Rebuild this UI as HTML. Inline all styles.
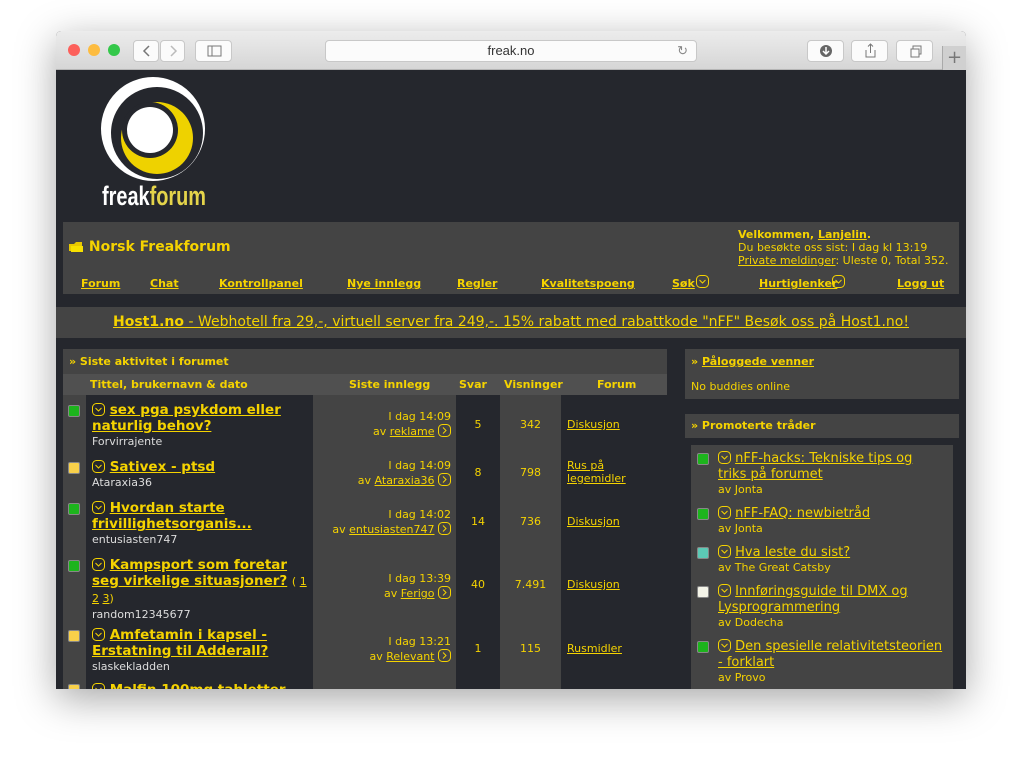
<!DOCTYPE html>
<html><head><meta charset="utf-8"><style>
*{margin:0;padding:0;box-sizing:border-box}
body{width:1024px;height:768px;background:#fff;position:relative;overflow:hidden;font-family:"DejaVu Sans","Liberation Sans",sans-serif;font-size:11px;color:#f5d300}
.win{position:absolute;left:56px;top:31px;width:910px;height:658px;background:#25272d;box-shadow:0 10px 40px rgba(0,0,0,.35);border-radius:5px 5px 0 0;overflow:hidden}
.bar{position:absolute;left:0;top:0;width:910px;height:39px;background:linear-gradient(#ececec,#d6d6d6);border-bottom:1px solid #b5b5b5}
.dot{position:absolute;top:13px;width:12px;height:12px;border-radius:50%}
.btn{position:absolute;top:9px;height:22px;background:#fbfbfb;border:1px solid #c8c8c8;border-radius:4px}
.a{position:absolute}
a,.u{color:#f5d300;text-decoration:underline}
.p{background:#444}
.b{font-weight:bold}
.ic{display:inline-block;vertical-align:-2px}
.sq{position:absolute;width:12px;height:12px;border-radius:2px;border:1px solid #888}
.t{font-size:13.5px;font-weight:bold;line-height:16px}
.r{text-align:right}
.c{text-align:center}
.pi{position:absolute;left:640px;width:250px;font-size:13px;line-height:16px;padding-left:22px}
.pi .sq{left:1px;top:2px}
</style></head><body>
<div class="win">
 <div class="bar">
  <div class="dot" style="left:12px;background:#fc605b"></div>
  <div class="dot" style="left:32px;background:#fdbc40"></div>
  <div class="dot" style="left:52px;background:#34c84a"></div>
  <div class="btn" style="left:77px;width:26px"><svg width="26" height="20"><path d="M15 5l-5 5 5 5" stroke="#777" stroke-width="1.5" fill="none"/></svg></div>
  <div class="btn" style="left:104px;width:25px"><svg width="25" height="20"><path d="M10 5l5 5-5 5" stroke="#bbb" stroke-width="1.5" fill="none"/></svg></div>
  <div class="btn" style="left:139px;width:37px"><svg width="37" height="20"><rect x="12" y="5" width="13" height="10" stroke="#777" fill="none"/><line x1="16" y1="5" x2="16" y2="15" stroke="#777"/></svg></div>
  <div class="btn" style="left:269px;width:372px;text-align:center;font-family:'Liberation Sans',sans-serif;font-size:13px;color:#333;line-height:20px">freak.no<span style="position:absolute;right:8px;color:#888">↻</span></div>
  <div class="btn" style="left:751px;width:37px"><svg width="37" height="20"><circle cx="18" cy="10" r="6" fill="#666"/><path d="M18 6v6M15 10l3 3 3-3" stroke="#fff" stroke-width="1.5" fill="none"/></svg></div>
  <div class="btn" style="left:795px;width:37px"><svg width="37" height="20"><path d="M14 9v7h9V9M18.5 3v9M16 5.5l2.5-2.5 2.5 2.5" stroke="#777" fill="none"/></svg></div>
  <div class="btn" style="left:840px;width:37px"><svg width="37" height="20"><rect x="14" y="8" width="8" height="8" stroke="#777" fill="none"/><path d="M16 8V5h8v8h-2" stroke="#777" fill="none"/></svg></div>
  <div style="position:absolute;left:886px;top:15px;width:24px;height:24px;background:#d0d0d0;border-left:1px solid #aaa;color:#777;font-size:18px;text-align:center;line-height:24px">+</div>
 </div>
 <!-- logo -->
 <svg class="a" style="left:44px;top:46px" width="112" height="132" viewBox="0 0 112 132">
  <circle cx="53" cy="52" r="52" fill="#fff"/>
  <circle cx="57" cy="56" r="46" fill="#25272d"/>
  <circle cx="57" cy="61" r="36" fill="#eed200"/>
  <circle cx="50" cy="53" r="28" fill="#25272d"/>
  <circle cx="50" cy="53" r="23" fill="#fff"/>
  <text x="2" y="128" font-family="Liberation Sans,sans-serif" font-weight="bold" font-size="27" fill="#fff" textLength="104" lengthAdjust="spacingAndGlyphs">freak<tspan fill="#e4d44a">forum</tspan></text>
 </svg>
 <!-- nav panel -->
 <div class="a p" style="left:7px;top:191px;width:896px;height:72px"></div>
 <div class="a b" style="left:12px;top:208px;font-size:14px"><svg class="ic" width="16" height="14"><path d="M1 5h5l2-2h6v9H1z" fill="#e8c800"/><path d="M3 7h12v6H3z" fill="#f7e000"/></svg> Norsk Freakforum</div>
 <div class="a" style="left:682px;top:197px;line-height:13px;font-size:11px"><span class="b">Velkommen, <span class="u">Lanjelin</span>.</span><br>Du besøkte oss sist: I dag kl 13:19<br><span class="u">Private meldinger</span>: Uleste 0, Total 352.</div>
 <div class="a b" style="left:0;top:246px;font-size:11px;width:910px">
  <a class="a" style="left:25px">Forum</a><a class="a" style="left:94px">Chat</a><a class="a" style="left:163px">Kontrollpanel</a><a class="a" style="left:291px">Nye innlegg</a><a class="a" style="left:401px">Regler</a><a class="a" style="left:485px">Kvalitetspoeng</a><a class="a" style="left:616px">Søk</a><svg class="a" style="left:640px;top:-2px" width="13" height="13"><rect x="0.5" y="0.5" width="12" height="12" rx="4" stroke="#f5d300" fill="none"/><path d="M3.5 5l3 3 3-3" stroke="#f5d300" fill="none"/></svg><a class="a" style="left:703px">Hurtiglenker</a><svg class="a" style="left:776px;top:-2px" width="13" height="13"><rect x="0.5" y="0.5" width="12" height="12" rx="4" stroke="#f5d300" fill="none"/><path d="M3.5 5l3 3 3-3" stroke="#f5d300" fill="none"/></svg><a class="a" style="left:841px">Logg ut</a>
 </div>
 <!-- banner -->
 <div class="a p" style="left:0;top:276px;width:910px;height:31px;text-align:center;font-size:14px;line-height:31px"><a><b>Host1.no</b> - Webhotell fra 29,-, virtuell server fra 249,-. 15% rabatt med rabattkode "nFF" Besøk oss på Host1.no!</a></div>
 <!-- left table -->
 <div class="a p b" style="left:7px;top:318px;width:604px;height:25px;line-height:25px;padding-left:6px">» Siste aktivitet i forumet</div>
 <div class="a b" style="left:7px;top:343px;width:604px;height:21px;background:#505050;line-height:21px">
  <span class="a" style="left:27px">Tittel, brukernavn &amp; dato</span><span class="a" style="left:286px">Siste innlegg</span><span class="a" style="left:396px">Svar</span><span class="a" style="left:441px">Visninger</span><span class="a" style="left:534px">Forum</span></div>
 <div class="a p" style="left:7px;top:364px;width:23px;height:294px"></div>
 <div class="a p" style="left:257px;top:364px;width:143px;height:294px"></div>
 <div class="a p" style="left:444px;top:364px;width:61px;height:294px"></div>

 <!-- row 1 -->
 <div class="sq" style="left:12px;top:374px;background:#1db41d"></div>
 <div class="a" style="left:36px;top:371px;width:215px"><div class="t"><svg class="ic" width="13" height="13"><rect x="0.5" y="0.5" width="12" height="12" rx="4" stroke="#f5d300" fill="none"/><path d="M3.5 5l3 3 3-3" stroke="#f5d300" fill="none"/></svg> <a>sex pga psykdom eller naturlig behov?</a></div><div style="color:#ddd;margin-top:1px">Forvirrajente</div></div>
 <div class="a r" style="left:257px;top:378px;width:138px;line-height:15px">I dag 14:09<br>av <a>reklame</a> <svg class="ic" width="13" height="13"><rect x="0.5" y="0.5" width="12" height="12" rx="4" stroke="#f5d300" fill="none"/><path d="M5 3.5l3 3-3 3" stroke="#f5d300" fill="none"/></svg></div>
 <div class="a c" style="left:400px;top:387px;width:44px">5</div><div class="a c" style="left:444px;top:387px;width:61px">342</div><a class="a" style="left:511px;top:387px">Diskusjon</a>
 <!-- row 2 -->
 <div class="sq" style="left:12px;top:431px;background:#f8d04a"></div>
 <div class="a" style="left:36px;top:428px;width:215px"><div class="t"><svg class="ic" width="13" height="13"><rect x="0.5" y="0.5" width="12" height="12" rx="4" stroke="#f5d300" fill="none"/><path d="M3.5 5l3 3 3-3" stroke="#f5d300" fill="none"/></svg> <a>Sativex - ptsd</a></div><div style="color:#ddd;margin-top:1px">Ataraxia36</div></div>
 <div class="a r" style="left:257px;top:427px;width:138px;line-height:15px">I dag 14:09<br>av <a>Ataraxia36</a> <svg class="ic" width="13" height="13"><rect x="0.5" y="0.5" width="12" height="12" rx="4" stroke="#f5d300" fill="none"/><path d="M5 3.5l3 3-3 3" stroke="#f5d300" fill="none"/></svg></div>
 <div class="a c" style="left:400px;top:435px;width:44px">8</div><div class="a c" style="left:444px;top:435px;width:61px">798</div><a class="a" style="left:511px;top:428px;line-height:13px">Rus på<br>legemidler</a>
 <!-- row 3 -->
 <div class="sq" style="left:12px;top:472px;background:#1db41d"></div>
 <div class="a" style="left:36px;top:469px;width:215px"><div class="t"><svg class="ic" width="13" height="13"><rect x="0.5" y="0.5" width="12" height="12" rx="4" stroke="#f5d300" fill="none"/><path d="M3.5 5l3 3 3-3" stroke="#f5d300" fill="none"/></svg> <a>Hvordan starte frivillighetsorganis...</a></div><div style="color:#ddd;margin-top:1px">entusiasten747</div></div>
 <div class="a r" style="left:257px;top:476px;width:138px;line-height:15px">I dag 14:02<br>av <a>entusiasten747</a> <svg class="ic" width="13" height="13"><rect x="0.5" y="0.5" width="12" height="12" rx="4" stroke="#f5d300" fill="none"/><path d="M5 3.5l3 3-3 3" stroke="#f5d300" fill="none"/></svg></div>
 <div class="a c" style="left:400px;top:484px;width:44px">14</div><div class="a c" style="left:444px;top:484px;width:61px">736</div><a class="a" style="left:511px;top:484px">Diskusjon</a>
 <!-- row 4 -->
 <div class="sq" style="left:12px;top:529px;background:#1db41d"></div>
 <div class="a" style="left:36px;top:526px;width:225px"><div class="t"><svg class="ic" width="13" height="13"><rect x="0.5" y="0.5" width="12" height="12" rx="4" stroke="#f5d300" fill="none"/><path d="M3.5 5l3 3 3-3" stroke="#f5d300" fill="none"/></svg> <a>Kampsport som foretar seg virkelige situasjoner?</a> <span style="font-weight:normal;font-size:11px">( <a>1</a> <a>2</a> <a>3</a>)</span></div><div style="color:#ddd;margin-top:1px">random12345677</div></div>
 <div class="a r" style="left:257px;top:540px;width:138px;line-height:15px">I dag 13:39<br>av <a>Ferigo</a> <svg class="ic" width="13" height="13"><rect x="0.5" y="0.5" width="12" height="12" rx="4" stroke="#f5d300" fill="none"/><path d="M5 3.5l3 3-3 3" stroke="#f5d300" fill="none"/></svg></div>
 <div class="a c" style="left:400px;top:547px;width:44px">40</div><div class="a c" style="left:444px;top:547px;width:61px">7.491</div><a class="a" style="left:511px;top:547px">Diskusjon</a>
 <!-- row 5 -->
 <div class="sq" style="left:12px;top:599px;background:#f8d04a"></div>
 <div class="a" style="left:36px;top:596px;width:215px"><div class="t"><svg class="ic" width="13" height="13"><rect x="0.5" y="0.5" width="12" height="12" rx="4" stroke="#f5d300" fill="none"/><path d="M3.5 5l3 3 3-3" stroke="#f5d300" fill="none"/></svg> <a>Amfetamin i kapsel - Erstatning til Adderall?</a></div><div style="color:#ddd;margin-top:1px">slaskekladden</div></div>
 <div class="a r" style="left:257px;top:603px;width:138px;line-height:15px">I dag 13:21<br>av <a>Relevant</a> <svg class="ic" width="13" height="13"><rect x="0.5" y="0.5" width="12" height="12" rx="4" stroke="#f5d300" fill="none"/><path d="M5 3.5l3 3-3 3" stroke="#f5d300" fill="none"/></svg></div>
 <div class="a c" style="left:400px;top:611px;width:44px">1</div><div class="a c" style="left:444px;top:611px;width:61px">115</div><a class="a" style="left:511px;top:611px">Rusmidler</a>
 <!-- row 6 partial -->
 <div class="sq" style="left:12px;top:653px;background:#f8d04a"></div>
 <div class="a t" style="left:36px;top:651px"><svg class="ic" width="13" height="13"><rect x="0.5" y="0.5" width="12" height="12" rx="4" stroke="#f5d300" fill="none"/><path d="M3.5 5l3 3 3-3" stroke="#f5d300" fill="none"/></svg> <a>Malfin 100mg tabletter</a></div>

 <!-- right column -->
 <div class="a p" style="left:629px;top:318px;width:274px;height:50px"></div>
 <div class="a b" style="left:635px;top:324px">» <a>Påloggede venner</a></div>
 <div class="a" style="left:635px;top:349px">No buddies online</div>
 <div class="a p b" style="left:629px;top:383px;width:274px;height:24px;line-height:24px;padding-left:6px">» Promoterte tråder</div>
 <div class="a p" style="left:635px;top:414px;width:262px;height:250px"></div>
 <div class="pi" style="top:420px;width:245px"><div class="sq" style="background:#1db41d"></div><svg class="ic" width="13" height="13"><rect x="0.5" y="0.5" width="12" height="12" rx="4" stroke="#f5d300" fill="none"/><path d="M3.5 5l3 3 3-3" stroke="#f5d300" fill="none"/></svg> <a>nFF-hacks: Tekniske tips og</a><br><a>triks på forumet</a><div style="font-size:11px;line-height:14px">av Jonta</div></div>
 <div class="pi" style="top:475px"><div class="sq" style="background:#1db41d"></div><svg class="ic" width="13" height="13"><rect x="0.5" y="0.5" width="12" height="12" rx="4" stroke="#f5d300" fill="none"/><path d="M3.5 5l3 3 3-3" stroke="#f5d300" fill="none"/></svg> <a>nFF-FAQ: newbietråd</a><div style="font-size:11px;line-height:14px">av Jonta</div></div>
 <div class="pi" style="top:514px"><div class="sq" style="background:#5cc9b5"></div><svg class="ic" width="13" height="13"><rect x="0.5" y="0.5" width="12" height="12" rx="4" stroke="#f5d300" fill="none"/><path d="M3.5 5l3 3 3-3" stroke="#f5d300" fill="none"/></svg> <a>Hva leste du sist?</a><div style="font-size:11px;line-height:14px">av The Great Catsby</div></div>
 <div class="pi" style="top:553px"><div class="sq" style="background:#f4f4e8"></div><svg class="ic" width="13" height="13"><rect x="0.5" y="0.5" width="12" height="12" rx="4" stroke="#f5d300" fill="none"/><path d="M3.5 5l3 3 3-3" stroke="#f5d300" fill="none"/></svg> <a>Innføringsguide til DMX og</a><br><a>Lysprogrammering</a><div style="font-size:11px;line-height:14px">av Dodecha</div></div>
 <div class="pi" style="top:608px"><div class="sq" style="background:#1db41d"></div><svg class="ic" width="13" height="13"><rect x="0.5" y="0.5" width="12" height="12" rx="4" stroke="#f5d300" fill="none"/><path d="M3.5 5l3 3 3-3" stroke="#f5d300" fill="none"/></svg> <a>Den spesielle relativitetsteorien</a><br><a>- forklart</a><div style="font-size:11px;line-height:14px">av Provo</div></div>
</div>
</body></html>
